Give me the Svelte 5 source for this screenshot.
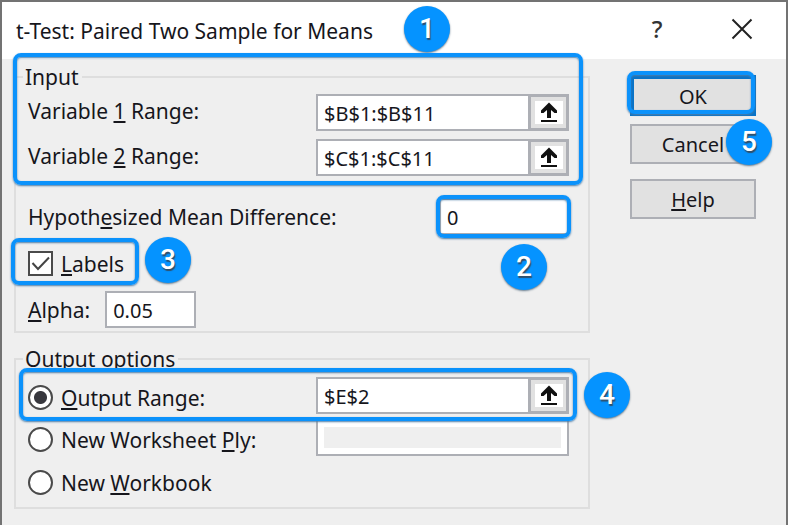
<script>
    let range1 = "$B$1:$B$11";
    let range2 = "$C$1:$C$11";
    let meanDiff = "0";
    let labels = true;
    let alpha = "0.05";
    let output = "range";
    let outputRange = "$E$2";
    let plyName = "";
</script>

<style>
    :global(body) {
        background-color: #efefef;
    }
    .dialog {
        box-sizing: border-box;
        min-height: 100vh;
        border: 2px solid #737373;
        border-bottom: none;
        font-family: "Noto Sans", "Open Sans", sans-serif;
        font-size: 21px;
        line-height: 22px;
        color: #16161c;
    }
    .titlebar {
        display: flex;
        align-items: center;
        height: 57px;
        padding: 0 30px 0 14px;
        background-color: #fff;
    }
    h1 {
        margin: 0 31px 0 0;
        font-size: 21px;
        font-weight: 400;
        white-space: nowrap;
    }
    .titlebar .badge {
        margin-bottom: 4px;
    }
    .window-buttons {
        display: flex;
        gap: 57px;
        margin-left: auto;
        padding-bottom: 4px;
    }
    .window-buttons button {
        display: flex;
        align-items: center;
        justify-content: center;
        width: 28px;
        height: 28px;
        padding: 0;
        border: none;
        background: none;
        font: inherit;
        font-size: 24px;
        font-weight: 500;
        color: #333;
    }
    .window-buttons svg {
        width: 22px;
        height: 22px;
    }
    .content {
        display: flex;
        gap: 40px;
        padding: 7px 30px 15px 12px;
    }
    .groups {
        flex: 1;
        min-width: 0;
    }
    fieldset {
        min-width: 0;
        margin: 0;
        padding: 6px 19px 3px 12px;
        border: 2px solid #dedede;
    }
    fieldset + fieldset {
        margin-top: 15px;
        padding-top: 7px;
        padding-bottom: 12px;
    }
    legend {
        margin-left: -5px;
        padding: 0 3px 0 2px;
    }
    .row {
        display: flex;
        align-items: center;
        justify-content: space-between;
    }
    .row.near {
        margin-top: 8px;
    }
    .row.far {
        margin-top: 22px;
    }
    .row.mid {
        justify-content: flex-start;
        gap: 15px;
        margin-top: 15px;
    }
    .range-label {
        padding-bottom: 4px;
    }
    .row.ply {
        margin-top: 5px;
    }
    u {
        text-decoration-thickness: 2px;
        text-underline-offset: 2px;
        text-decoration-skip-ink: none;
    }
    input[type="text"] {
        box-sizing: border-box;
        height: 37px;
        margin: 0;
        padding: 2px 6px 0;
        border: 2px solid #adafb5;
        border-radius: 0;
        outline: none;
        background-color: #fff;
        font: inherit;
        font-size: 20px;
        color: inherit;
    }
    .picker {
        display: flex;
        width: 253px;
    }
    .picker input[type="text"] {
        flex: 1;
        min-width: 0;
        border-right: none;
    }
    .picker button {
        display: flex;
        align-items: center;
        justify-content: center;
        box-sizing: border-box;
        width: 41px;
        height: 37px;
        padding: 0;
        border: 3px solid #adafb5;
        background-color: #e1e1e1;
    }
    .picker svg {
        flex: none;
        width: 28px;
        height: 23px;
        background-color: #fff;
    }
    input[type="text"].ply-name {
        width: 253px;
        border-color: #adafb5;
        box-shadow: inset 0 0 0 6px #fff;
        background-color: #efefef;
    }
    .mean {
        width: 130px;
    }
    .alpha {
        width: 91px;
    }
    .choice {
        display: flex;
        align-items: center;
        gap: 8px;
    }
    .row .choice {
        padding-top: 4px;
    }
    .choice input {
        appearance: none;
        box-sizing: border-box;
        flex: none;
        width: 25px;
        height: 25px;
        margin: 0;
        border: 2px solid #4a4a4a;
        background-color: #fff;
    }
    .choice input[type="radio"] {
        border-radius: 50%;
    }
    .choice input[type="radio"]:checked {
        background-image: radial-gradient(circle, #38383e 6px, #fff 7px);
    }
    .tick {
        display: grid;
    }
    .tick > * {
        grid-area: 1 / 1;
    }
    .tick svg {
        z-index: 1;
        width: 25px;
        height: 25px;
        pointer-events: none;
    }
    .workbook {
        margin-top: 14px;
    }

    /* callouts drawn over the dialog */
    .marked {
        position: relative;
    }
    .outline {
        position: absolute;
        border: 4px solid #0b92fb;
        border-radius: 8px;
        box-shadow: 0 1px 2px #4c7da8, inset 0 1px 2px #4c7da8;
        pointer-events: none;
        z-index: 2;
    }
    .labels-row {
        width: fit-content;
        margin-top: 16px;
    }
    .ranges .outline {
        inset: -41px -14px -9px -15px;
    }
    .mean-box .outline {
        inset: -3px -2px -3px -3px;
    }
    .labels-row .outline {
        inset: -13px -15px -9px -17px;
    }
    .output-row .outline {
        inset: -9px -8px -7px -9px;
    }
    .ok-box .outline {
        inset: -4px 1px 2px -3px;
    }
    .badge {
        box-sizing: border-box;
        flex: none;
        width: 46px;
        height: 46px;
        border-radius: 50%;
        background-color: #0593ff;
        box-shadow: 0 1px 2px #62798c;
        font-family: Roboto, sans-serif;
        font-size: 28px;
        font-weight: 500;
        line-height: 46px;
        text-align: center;
        color: #fff;
        text-shadow: 1px 2px 1px #30506c;
        pointer-events: none;
    }
    .marked > .badge {
        position: absolute;
        z-index: 3;
    }
    .mean-box .badge {
        top: 46px;
        right: 22px;
    }
    .labels-row .badge {
        top: -14px;
        right: -67px;
    }
    .output-row .badge {
        top: -5px;
        right: -61px;
    }
    .cancel-box .badge {
        top: -5px;
        right: -16px;
    }

    .actions {
        display: flex;
        flex-direction: column;
        width: 126px;
        padding-top: 9px;
    }
    .actions button {
        display: block;
        box-sizing: border-box;
        width: 100%;
        height: 40px;
        padding: 2px 0 0;
        border: 2px solid #adafb5;
        background-color: #e1e1e1;
        font: inherit;
        font-size: 20px;
        color: inherit;
    }
    .actions .default {
        height: 41px;
        border: 4px solid #0873c8;
    }
    .cancel-box {
        margin: 8px 0 15px;
    }
</style>

<div class="dialog" role="dialog" aria-labelledby="title">
    <div class="titlebar">
        <h1 id="title">t-Test: Paired Two Sample for Means</h1>
        <span class="badge">1</span>
        <div class="window-buttons">
            <button type="button">?</button>
            <button type="button" aria-label="Close">
                <svg viewBox="0 0 22 22" fill="none" stroke="#222" stroke-width="2">
                    <path d="M1.5 1.5 20.5 20.5M20.5 1.5 1.5 20.5" />
                </svg>
            </button>
        </div>
    </div>

    <div class="content">
        <div class="groups">
            <fieldset>
                <legend>Input</legend>
                <div class="ranges marked">
                    <div class="row">
                        <label class="range-label" for="range1">Variable <u>1</u> Range:</label>
                        <div class="picker">
                            <input type="text" id="range1" bind:value={range1} />
                            <button type="button" aria-label="Select range 1">
                                <svg viewBox="0 0 28 23">
                                    <path d="M14 1.5 22 9.500V12H19.500L16 9V17H12V9L8.500 12H6V9.500ZM6 19H22V21H6Z" fill="#111" />
                                </svg>
                            </button>
                        </div>
                    </div>
                    <div class="row near">
                        <label class="range-label" for="range2">Variable <u>2</u> Range:</label>
                        <div class="picker">
                            <input type="text" id="range2" bind:value={range2} />
                            <button type="button" aria-label="Select range 2">
                                <svg viewBox="0 0 28 23">
                                    <path d="M14 1.5 22 9.500V12H19.500L16 9V17H12V9L8.500 12H6V9.500ZM6 19H22V21H6Z" fill="#111" />
                                </svg>
                            </button>
                        </div>
                    </div>
                    <div class="outline"></div>
                </div>
                <div class="row far">
                    <label for="mean">Hypoth<u>e</u>sized Mean Difference:</label>
                    <div class="mean-box marked">
                        <input type="text" class="mean" id="mean" bind:value={meanDiff} />
                        <div class="outline"></div>
                        <span class="badge">2</span>
                    </div>
                </div>
                <div class="labels-row marked">
                    <label class="choice">
                        <span class="tick">
                            <input type="checkbox" bind:checked={labels} />
                            {#if labels}
                                <svg viewBox="0 0 25 25" fill="none" stroke="#444" stroke-width="2">
                                    <path d="M4.500 12 10 18 21 6.500" />
                                </svg>
                            {/if}
                        </span>
                        <span><u>L</u>abels</span>
                    </label>
                    <div class="outline"></div>
                    <span class="badge">3</span>
                </div>
                <div class="row mid">
                    <label for="alpha"><u>A</u>lpha:</label>
                    <input type="text" class="alpha" id="alpha" bind:value={alpha} />
                </div>
            </fieldset>

            <fieldset>
                <legend>Output options</legend>
                <div class="row output-row marked">
                    <label class="choice">
                        <input type="radio" name="output" value="range" bind:group={output} />
                        <span><u>O</u>utput Range:</span>
                    </label>
                    <div class="picker">
                        <input type="text" aria-label="Output range" bind:value={outputRange} />
                        <button type="button" aria-label="Select output range">
                            <svg viewBox="0 0 28 23">
                                <path d="M14 1.5 22 9.500V12H19.500L16 9V17H12V9L8.500 12H6V9.500ZM6 19H22V21H6Z" fill="#111" />
                            </svg>
                        </button>
                    </div>
                    <div class="outline"></div>
                    <span class="badge">4</span>
                </div>
                <div class="row ply">
                    <label class="choice">
                        <input type="radio" name="output" value="ply" bind:group={output} />
                        <span>New Worksheet <u>P</u>ly:</span>
                    </label>
                    <input type="text" class="ply-name" aria-label="Worksheet name" bind:value={plyName} disabled={output !== "ply"} />
                </div>
                <label class="choice workbook">
                    <input type="radio" name="output" value="workbook" bind:group={output} />
                    <span>New <u>W</u>orkbook</span>
                </label>
            </fieldset>
        </div>

        <div class="actions">
            <div class="ok-box marked">
                <button type="button" class="default">OK</button>
                <div class="outline"></div>
            </div>
            <div class="cancel-box marked">
                <button type="button">Cancel</button>
                <span class="badge">5</span>
            </div>
            <button type="button"><u>H</u>elp</button>
        </div>
    </div>
</div>
